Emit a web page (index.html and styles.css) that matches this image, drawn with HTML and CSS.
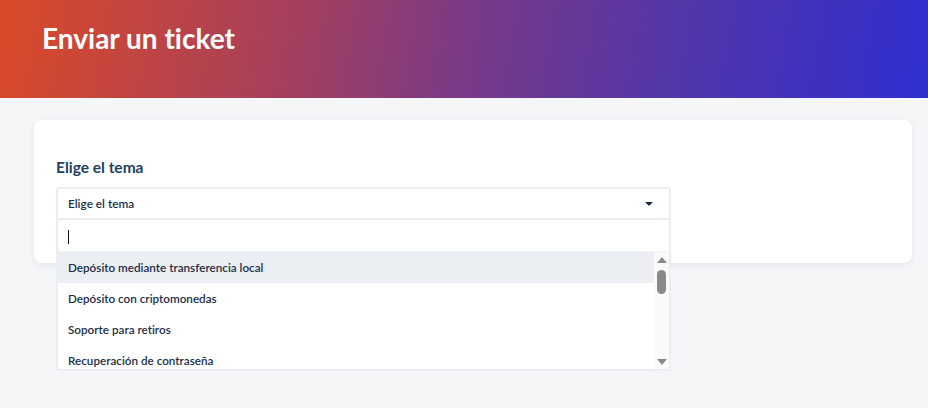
FILE: index.html
```html
<!DOCTYPE html>
<html lang="es">
<head>
<meta charset="utf-8">
<title>Enviar un ticket</title>
<link rel="stylesheet" href="styles.css">
</head>
<body>
<header class="hero">
  <h1 class="hero-title">Enviar un ticket</h1>
</header>
<main class="main">
  <section class="card">
    <label class="field-label">Elige el tema</label>
    <div class="select">
      <div class="select-box">
        <span class="select-value">Elige el tema</span>
        <span class="caret"></span>
      </div>
      <div class="dropdown">
        <div class="search"><span class="cursor"></span></div>
        <div class="list">
          <ul class="options">
            <li class="option active">Depósito mediante transferencia local</li>
            <li class="option">Depósito con criptomonedas</li>
            <li class="option">Soporte para retiros</li>
            <li class="option">Recuperación de contraseña</li>
          </ul>
          <div class="scrollbar">
            <span class="arrow-up"></span>
            <span class="thumb"></span>
            <span class="spacer"></span>
            <span class="arrow-down"></span>
          </div>
        </div>
      </div>
    </div>
  </section>
</main>
</body>
</html>
```
FILE: styles.css
```css
* { box-sizing: border-box; }
html, body { margin: 0; padding: 0; }
body {
  width: 928px;
  height: 408px;
  overflow: hidden;
  background: #f5f6f8;
  font-family: Lato, "Open Sans", sans-serif;
  font-variant-ligatures: none;
}
.hero {
  height: 98px;
  padding: 21px 0 0 42px;
  background: linear-gradient(100deg, #db4a28 0%, #a8405a 30%, #7a3a86 50%, #5336a8 72%, #2f2ed0 100%);
}
.hero-title {
  margin: 0;
  color: #fff;
  font-size: 28px;
  line-height: 35px;
  font-weight: 700;
}
.main {
  padding: 22px 16px 0 34px;
}
.card {
  background: #fff;
  border-radius: 8px;
  box-shadow: 0 2px 6px rgba(40, 50, 80, 0.08);
  padding: 37px 22px 43px 22px;
}
.field-label {
  display: block;
  color: #23405e;
  font-size: 15.5px;
  font-weight: 700;
  line-height: 20px;
  margin-bottom: 10px;
}
.select {
  position: relative;
  width: 615px;
}
.select-box {
  height: 33px;
  border: 2px solid #eaedf2;
  border-radius: 3px 3px 0 0;
  display: flex;
  align-items: center;
  justify-content: space-between;
  padding: 0 16px 0 10px;
  color: #1c2f47;
  font-size: 11.8px;
  font-weight: 600;
}
.caret {
  width: 0;
  height: 0;
  border-left: 4px solid transparent;
  border-right: 4px solid transparent;
  border-top: 4px solid #1a2b44;
}
.dropdown {
  position: absolute;
  left: 0;
  right: 0;
  top: 33px;
  background: #fff;
  border: 2px solid #eaedf2;
  border-top: none;
  z-index: 2;
}
.search {
  height: 32px;
  padding: 10px 10px 0 10px;
  border-bottom: 1px solid #f3f4f6;
}
.cursor {
  display: block;
  width: 1px;
  height: 14px;
  background: #111;
}
.list {
  display: flex;
  height: 117px;
  overflow: hidden;
}
.options {
  flex: 1;
  margin: 0;
  padding: 0;
  list-style: none;
}
.option {
  height: 31px;
  line-height: 31px;
  padding-left: 10px;
  color: #1c2f47;
  font-size: 11.7px;
  font-weight: 600;
  white-space: nowrap;
}
.option.active { background: #ebeef2; }
.scrollbar {
  width: 15px;
  background: #fafafa;
  display: flex;
  flex-direction: column;
  align-items: center;
  padding: 5px 0 4px;
}
.arrow-up, .arrow-down {
  width: 0;
  height: 0;
  border-left: 5px solid transparent;
  border-right: 5px solid transparent;
}
.arrow-up { border-bottom: 6px solid #8a8a8a; }
.arrow-down { border-top: 6px solid #8a8a8a; }
.thumb {
  width: 9px;
  height: 24px;
  margin-top: 7px;
  border-radius: 5px;
  background: #8a8a8a;
}
.spacer { flex: 1; }
```
